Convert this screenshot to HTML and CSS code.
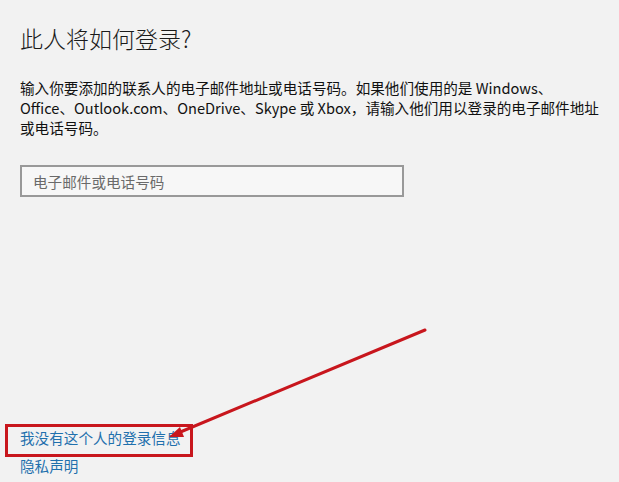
FILE: index.html
```html
<!DOCTYPE html>
<html lang="zh-CN">
<head>
<meta charset="utf-8">
<title>此人将如何登录?</title>
<link rel="stylesheet" href="styles.css">
</head>
<body>
<div class="page">
  <h1 class="title">此人将如何登录?</h1>
  <p class="desc">输入你要添加的联系人的电子邮件地址或电话号码。如果他们使用的是 Windows、<br>Office、Outlook.com、OneDrive、Skype 或 Xbox，请输入他们用以登录的电子邮件地址<br>或电话号码。</p>
  <div class="field"><span class="placeholder">电子邮件或电话号码</span></div>
  <div class="links">
    <a class="link">我没有这个人的登录信息</a>
    <a class="link">隐私声明</a>
  </div>
</div>
<div class="mark-box"></div>
<svg class="mark-arrow" width="619" height="482" viewBox="0 0 619 482">
  <line x1="425" y1="330" x2="178" y2="433" stroke="#c8161d" stroke-width="3" stroke-linecap="round"/>
  <polygon points="169,437 180,427 184,437" fill="#c8161d"/>
</svg>
</body>
</html>
```
FILE: styles.css
```css
html, body {
  margin: 0;
  padding: 0;
  background: #f2f2f2;
}
body {
  width: 619px;
  height: 482px;
  overflow: hidden;
  position: relative;
  font-family: "Noto Sans CJK SC", "Noto Sans", sans-serif;
  color: #111;
}
.page {
  height: 482px;
  box-sizing: border-box;
  padding: 21px 0 6px 20px;
  display: flex;
  flex-direction: column;
}
.title {
  margin: 0;
  font-size: 23px;
  line-height: 34px;
  font-weight: 300;
  color: #1a1a1a;
}
.desc {
  margin: 23px 0 0 0;
  font-size: 14.6px;
  line-height: 20px;
  font-weight: 400;
  color: #111;
  white-space: nowrap;
}
.field {
  margin-top: 27px;
  width: 384px;
  height: 32px;
  box-sizing: border-box;
  border: 2px solid #999;
  background: #f7f7f7;
  padding-left: 11px;
  display: flex;
  align-items: center;
}
.placeholder {
  font-size: 14.6px;
  color: #6a6a6a;
}
.links {
  margin-top: auto;
  display: flex;
  flex-direction: column;
  align-items: flex-start;
  gap: 8px;
}
.link {
  font-size: 14.6px;
  line-height: 20px;
  color: #1f70ad;
  text-decoration: none;
}
.mark-box {
  position: absolute;
  left: 5px;
  top: 424px;
  width: 188px;
  height: 33px;
  box-sizing: border-box;
  border: 3px solid #c8161d;
}
.mark-arrow {
  position: absolute;
  left: 0;
  top: 0;
}
```
